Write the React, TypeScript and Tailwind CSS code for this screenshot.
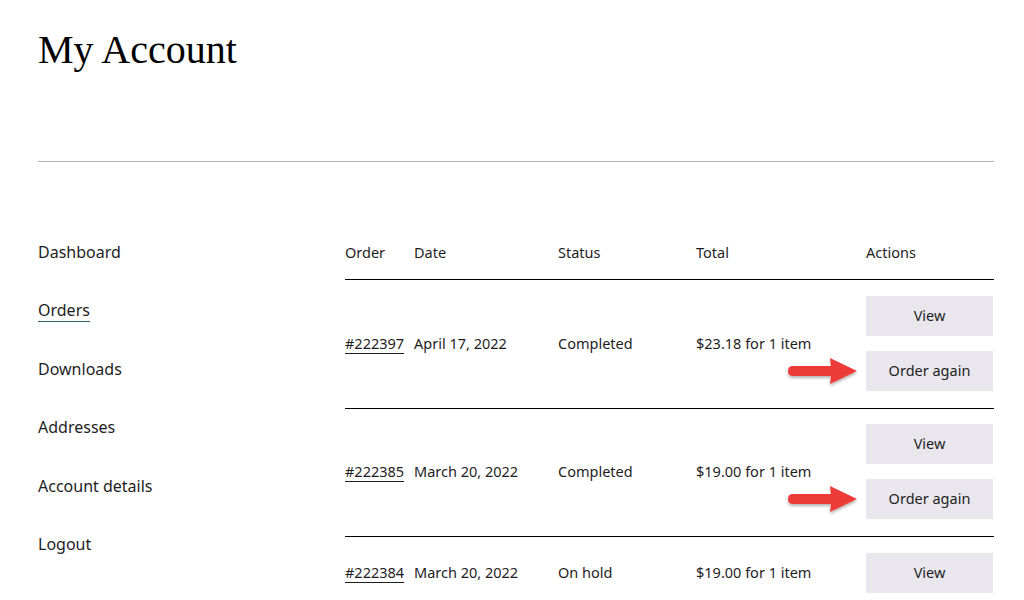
import React from "react";

const font = { fontFamily: '"Noto Sans", "Open Sans", sans-serif' };

function Arrow() {
  return (
    <svg
      className="absolute left-[-81px] top-1/2 -translate-y-1/2"
      width="80"
      height="36"
      viewBox="0 0 80 36"
    >
      <defs>
        <filter id="sh" x="-20%" y="-30%" width="140%" height="170%">
          <feDropShadow dx="0" dy="2" stdDeviation="1.5" floodColor="#000" floodOpacity="0.3" />
        </filter>
      </defs>
      <path
        d="M8 13 L46 13 L45 5 L72 18 L45 31 L46 23 L8 23 Q3 23 3 18 Q3 13 8 13 Z"
        fill="#ec3b38"
        filter="url(#sh)"
      />
    </svg>
  );
}

function Btn({ label, arrow }: { label: string; arrow?: boolean }) {
  return (
    <div className="relative">
      {arrow && <Arrow />}
      <div className="h-[40px] w-[127px] bg-[#e9e6ed] flex items-center justify-center text-[14.5px] text-[#1e1e1e]">
        {label}
      </div>
    </div>
  );
}

type Row = { id: string; date: string; status: string; total: string; again: boolean; pad: string };

const rows: Row[] = [
  { id: "#222397", date: "April 17, 2022", status: "Completed", total: "$23.18 for 1 item", again: true, pad: "border-b border-black pt-[16px] pb-[17px]" },
  { id: "#222385", date: "March 20, 2022", status: "Completed", total: "$19.00 for 1 item", again: true, pad: "border-b border-black pt-[15px] pb-[17px]" },
  { id: "#222384", date: "March 20, 2022", status: "On hold", total: "$19.00 for 1 item", again: false, pad: "pt-[16px]" },
];

export default function App() {
  return (
    <div className="w-[1024px] h-[600px] overflow-hidden bg-white text-[#1e1e1e]" style={font}>
      <div className="pl-[38px] pr-[30px] pt-[27px]">
        <h1
          className="text-[40px] leading-[46px] text-black"
          style={{ fontFamily: '"Liberation Serif", "Times New Roman", serif' }}
        >
          My Account
        </h1>
        <div className="mt-[88px] w-[956px] h-px bg-[#b4b4b4]" />
        <div className="flex mt-[70px]">
          <div className="w-[307px] shrink-0 flex flex-col text-[16px]">
            {["Dashboard", "Orders", "Downloads", "Addresses", "Account details", "Logout"].map((t) => (
              <div key={t} className="h-[58.4px] leading-[40px]">
                {t === "Orders" ? (
                  <span className="underline underline-offset-[5px] decoration-[#2f5d62]">{t}</span>
                ) : (
                  t
                )}
              </div>
            ))}
          </div>
          <div className="w-[649px] shrink-0 text-[14.5px]">
            <div className="flex h-[48px] items-start pt-[10px] leading-[20px] border-b border-black">
              <div className="w-[69px]">Order</div>
              <div className="w-[144px]">Date</div>
              <div className="w-[138px]">Status</div>
              <div className="w-[170px]">Total</div>
              <div className="flex-1">Actions</div>
            </div>
            {rows.map((r) => (
              <div key={r.id} className={`flex items-center ${r.pad}`}>
                <div className="w-[69px]">
                  <span className="underline underline-offset-[4px]">{r.id}</span>
                </div>
                <div className="w-[144px]">{r.date}</div>
                <div className="w-[138px]">{r.status}</div>
                <div className="w-[170px]">{r.total}</div>
                <div className="flex-1 flex flex-col gap-[15px]">
                  <Btn label="View" />
                  {r.again && <Btn label="Order again" arrow />}
                </div>
              </div>
            ))}
          </div>
        </div>
      </div>
    </div>
  );
}
